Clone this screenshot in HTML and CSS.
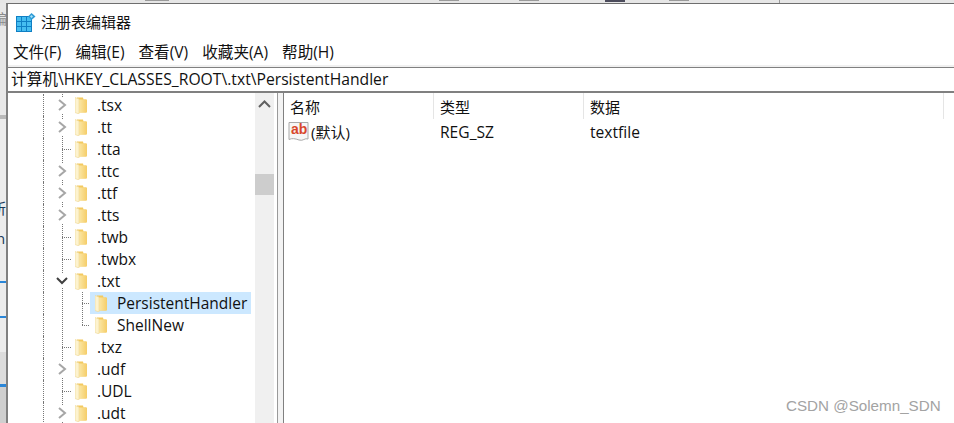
FILE: index.html
```html
<!DOCTYPE html>
<html lang="zh-CN">
<head>
    <meta charset="UTF-8">
    <title>注册表编辑器</title>
    <link rel="stylesheet" href="styles.css">
</head>
<body>
    <svg class="defs" width="0" height="0">
        <defs>
            <linearGradient id="gold" x1="0" y1="0" x2="1" y2="0">
                <stop offset="0" stop-color="#fbe7a6"/>
                <stop offset="1" stop-color="#f5cd68"/>
            </linearGradient>
        </defs>
        <symbol id="folder" viewBox="0 0 12 17">
            <path d="M2 0.5H8L8.5 2.5H11V15.5H2Z" fill="#f3c95f"/>
            <path d="M4 2.5H12V15.5H4Z" fill="url(#gold)"/>
            <path d="M0 0.5L4 2V17L0 15.5Z" fill="#fdf3cf" stroke="#eed695" stroke-width="0.6"/>
        </symbol>
        <symbol id="closed" viewBox="0 0 10 12">
            <path d="M2 1L8 6L2 11" fill="none" stroke="#a6a6a6" stroke-width="2"/>
        </symbol>
        <symbol id="open" viewBox="0 0 12 10">
            <path d="M1 2L6 7L11 2" fill="none" stroke="#404040" stroke-width="2"/>
        </symbol>
    </svg>

    <div class="top-strip">
        <span class="chip chip-a"></span><span class="chip chip-b"></span><span class="chip chip-c"></span><span class="chip chip-d"></span><span class="chip chip-e"></span><span class="chip chip-f"></span>
    </div>

    <div class="page">
        <div class="side-strip">
            <div class="side-a"><span class="side-faint">编</span></div>
            <div class="side-b"></div>
            <div class="side-c"><span class="side-char side-char-1">所</span><span class="side-char side-char-2">n</span></div>
            <div class="side-d"></div>
            <div class="side-e"></div>
            <div class="side-f"></div>
        </div>

        <div class="window">
            <div class="title-bar">
                <svg class="app-icon" width="20" height="20" viewBox="0 0 20 20">
                    <rect x="0" y="3" width="16" height="16" fill="#0f7fc4"/>
                    <g fill="#45bdf0">
                        <rect x="1" y="4" width="4" height="4"/><rect x="6" y="4" width="4" height="4"/><rect x="11" y="4" width="4" height="4"/>
                        <rect x="1" y="9" width="4" height="4"/><rect x="6" y="9" width="4" height="4"/><rect x="11" y="9" width="4" height="4"/>
                        <rect x="1" y="14" width="4" height="4"/><rect x="6" y="14" width="4" height="4"/><rect x="11" y="14" width="4" height="4"/>
                    </g>
                    <path d="M15.5 0L19.5 3.5L15.5 7L12 3.5Z" fill="#2e9bd6"/>
                    <path d="M15.5 2L17 3.5L15.5 5L14 3.5Z" fill="#a8e2f8"/>
                </svg>
                <span class="title-text">注册表编辑器</span>
            </div>

            <div class="menu-bar">
                <span>文件(F)</span>
                <span>编辑(E)</span>
                <span>查看(V)</span>
                <span>收藏夹(A)</span>
                <span>帮助(H)</span>
            </div>

            <div class="address-bar">计算机\HKEY_CLASSES_ROOT\.txt\PersistentHandler</div>

            <div class="main">
                <div class="tree-pane">
                    <div class="tree">
                        <div class="tree-row"><span class="guide"></span><span class="twist"><svg width="10" height="12"><use href="#closed"/></svg></span><svg class="folder"><use href="#folder"/></svg><span class="label">.tsx</span></div>
                        <div class="tree-row"><span class="guide"></span><span class="twist"><svg width="10" height="12"><use href="#closed"/></svg></span><svg class="folder"><use href="#folder"/></svg><span class="label">.tt</span></div>
                        <div class="tree-row"><span class="guide"></span><span class="twist leaf"></span><svg class="folder"><use href="#folder"/></svg><span class="label">.tta</span></div>
                        <div class="tree-row"><span class="guide"></span><span class="twist"><svg width="10" height="12"><use href="#closed"/></svg></span><svg class="folder"><use href="#folder"/></svg><span class="label">.ttc</span></div>
                        <div class="tree-row"><span class="guide"></span><span class="twist"><svg width="10" height="12"><use href="#closed"/></svg></span><svg class="folder"><use href="#folder"/></svg><span class="label">.ttf</span></div>
                        <div class="tree-row"><span class="guide"></span><span class="twist"><svg width="10" height="12"><use href="#closed"/></svg></span><svg class="folder"><use href="#folder"/></svg><span class="label">.tts</span></div>
                        <div class="tree-row"><span class="guide"></span><span class="twist leaf"></span><svg class="folder"><use href="#folder"/></svg><span class="label">.twb</span></div>
                        <div class="tree-row"><span class="guide"></span><span class="twist leaf"></span><svg class="folder"><use href="#folder"/></svg><span class="label">.twbx</span></div>
                        <div class="tree-row"><span class="guide"></span><span class="twist"><svg width="12" height="10"><use href="#open"/></svg></span><svg class="folder"><use href="#folder"/></svg><span class="label">.txt</span></div>
                        <div class="tree-row"><span class="guide"></span><span class="twist plain"></span><span class="elbow"></span><span class="child selected"><svg class="folder"><use href="#folder"/></svg><span class="label">PersistentHandler</span></span></div>
                        <div class="tree-row"><span class="guide"></span><span class="twist plain"></span><span class="elbow last"></span><span class="child"><svg class="folder"><use href="#folder"/></svg><span class="label">ShellNew</span></span></div>
                        <div class="tree-row"><span class="guide"></span><span class="twist leaf"></span><svg class="folder"><use href="#folder"/></svg><span class="label">.txz</span></div>
                        <div class="tree-row"><span class="guide"></span><span class="twist"><svg width="10" height="12"><use href="#closed"/></svg></span><svg class="folder"><use href="#folder"/></svg><span class="label">.udf</span></div>
                        <div class="tree-row"><span class="guide"></span><span class="twist leaf"></span><svg class="folder"><use href="#folder"/></svg><span class="label">.UDL</span></div>
                        <div class="tree-row"><span class="guide"></span><span class="twist"><svg width="10" height="12"><use href="#closed"/></svg></span><svg class="folder"><use href="#folder"/></svg><span class="label">.udt</span></div>
                    </div>
                    <div class="scrollbar">
                        <svg class="scroll-up" width="13" height="8" viewBox="0 0 13 8"><path d="M1 7L6.5 1.5L12 7" fill="none" stroke="#606060" stroke-width="2"/></svg>
                        <div class="scroll-thumb"></div>
                    </div>
                </div>

                <div class="splitter"></div>

                <div class="list-pane">
                    <div class="list-head">
                        <span class="col col-name">名称</span>
                        <span class="col col-type">类型</span>
                        <span class="col col-data">数据</span>
                    </div>
                    <div class="list-row">
                        <span class="col col-name">
                            <svg class="value-icon" width="21" height="21" viewBox="0 0 21 21">
                                <path d="M1 1.5H20V18C17 16.5 15 20.5 11 19C7 17.5 4 17 1 18.5Z" fill="#f6f6f6" stroke="#a9a9a9"/>
                                <text class="ab" x="3" y="13">ab</text>
                            </svg>
                            <span>(默认)</span>
                        </span>
                        <span class="col col-type">REG_SZ</span>
                        <span class="col col-data">textfile</span>
                    </div>
                </div>
            </div>
        </div>
    </div>

    <div class="watermark">CSDN @Solemn_SDN</div>
</body>
</html>
```

FILE: styles.css
```css
html, body {
    margin: 0;
    height: 423px;
    overflow: hidden;
    background-color: #fff;
    font-family: "Open Sans", "Noto Sans CJK SC", sans-serif;
    font-size: 15.5px;
    color: #111;
}
.defs {
    display: block;
    height: 0;
}
.top-strip {
    display: flex;
    height: 3px;
    background-color: #e6e6e6;
    overflow: hidden;
}
.chip {
    display: block;
    height: 1px;
    background-color: #9a9a9a;
}
.chip-a { width: 24px; margin-left: 145px; }
.chip-b { width: 20px; margin-left: 270px; }
.chip-c { width: 20px; margin-left: 60px; }
.chip-d { width: 20px; margin-left: 66px; background-color: #4c4c5c; height: 2px; }
.chip-e { width: 20px; margin-left: 44px; }
.chip-f { width: 1px; margin-left: 90px; height: 3px; }
.page {
    display: flex;
    height: 420px;
}

/* bit of the window behind */
.side-strip {
    width: 6px;
    flex: none;
    display: flex;
    flex-direction: column;
    overflow: hidden;
    background-color: #e8e8e8;
}
.side-a {
    height: 112px;
    flex: none;
}
.side-faint {
    display: block;
    margin: 5px 0 0 -7px;
    font-size: 14px;
    color: #8a8a8a;
}
.side-b {
    height: 4px;
    flex: none;
    background-color: #b9b9b9;
}
.side-c {
    height: 162px;
    flex: none;
    background-color: #ececec;
}
.side-char {
    display: block;
    white-space: nowrap;
    font-size: 15px;
    line-height: 20px;
    color: #1a3a5a;
}
.side-char-1 { margin: 79px 0 0 -9px; }
.side-char-2 { margin: 10px 0 0 -4px; }
.side-d {
    height: 35px;
    flex: none;
    background-color: #ececec;
    border-top: 2px solid #2a86d8;
    box-sizing: border-box;
}
.side-e {
    height: 68px;
    flex: none;
    background: linear-gradient(#ececec 0, #ececec 52%, #dcdcdc 52%);
    border-top: 2px solid #2a86d8;
    box-sizing: border-box;
}
.side-f {
    height: 39px;
    flex: none;
    background-color: #cfcfcf;
    border-top: 3px solid #2a86d8;
    box-sizing: border-box;
}

.window {
    flex: 1;
    min-width: 0;
    display: flex;
    flex-direction: column;
    border-top: 1px solid #6e6e6e;
    border-left: 2px solid #808080;
    background-color: #fff;
}
.title-bar {
    display: flex;
    align-items: center;
    height: 35px;
    flex: none;
    padding-left: 8px;
    font-size: 15px;
}
.app-icon {
    margin-top: 2px;
}
.title-text {
    margin-left: 5px;
}
.menu-bar {
    display: flex;
    align-items: center;
    gap: 14px;
    height: 26px;
    box-sizing: border-box;
    padding: 0 0 1px 5px;
    flex: none;
    font-size: 15.6px;
}
.address-bar {
    flex: none;
    height: 24px;
    line-height: 24px;
    padding-left: 3px;
    border-top: 2px solid #f0f0f0;
    box-shadow: inset 0 1px 0 #808080;
    border-bottom: 2px solid #808080;
    white-space: nowrap;
    font-size: 15.7px;
}

.main {
    flex: 1;
    min-height: 0;
    display: flex;
    overflow: hidden;
}
.tree-pane {
    display: flex;
    width: 268px;
    flex: none;
}
.tree {
    width: 247px;
    flex: none;
    padding-top: 1px;
}
.tree-row {
    display: flex;
    align-items: center;
    height: 22px;
    padding-left: 35px;
    white-space: nowrap;
}
.guide {
    width: 9px;
    height: 22px;
    flex: none;
    box-sizing: border-box;
    border-left: 1px dotted #777;
}
.twist {
    display: flex;
    align-items: center;
    justify-content: center;
    width: 20px;
    height: 22px;
    flex: none;
    background: repeating-linear-gradient(#777 0 1px, transparent 1px 2px) 10px 0 / 1px 100% no-repeat;
}
.twist svg {
    background-color: #fff;
    display: block;
    box-shadow: 0 2px 0 #fff, 0 -2px 0 #fff;
}
.twist.leaf {
    background:
        repeating-linear-gradient(#777 0 1px, transparent 1px 2px) 10px 0 / 1px 100% no-repeat,
        repeating-linear-gradient(90deg, #777 0 1px, transparent 1px 2px) 10px 11px / 10px 1px no-repeat;
}
.folder {
    width: 12px;
    height: 17px;
    flex: none;
    margin-left: 3px;
}
.label {
    margin-left: 10px;
}
.elbow {
    width: 18px;
    height: 22px;
    flex: none;
    background:
        repeating-linear-gradient(#777 0 1px, transparent 1px 2px) 10px 0 / 1px 100% no-repeat,
        repeating-linear-gradient(90deg, #777 0 1px, transparent 1px 2px) 10px 11px / 8px 1px no-repeat;
}
.elbow.last {
    background:
        repeating-linear-gradient(#777 0 1px, transparent 1px 2px) 10px 0 / 1px 12px no-repeat,
        repeating-linear-gradient(90deg, #777 0 1px, transparent 1px 2px) 10px 11px / 8px 1px no-repeat;
}
.child {
    display: flex;
    align-items: center;
    width: 161px;
    height: 22px;
    padding-left: 2px;
    box-sizing: border-box;
}
.child.selected {
    background-color: #cce8ff;
}
.scrollbar {
    width: 19px;
    flex: none;
    background-color: #f0f0f0;
}
.scroll-up {
    display: block;
    margin: 7px 0 0 3px;
}
.scroll-thumb {
    height: 21px;
    margin-top: 66px;
    background-color: #cdcdcd;
}
.splitter {
    width: 7px;
    flex: none;
    background-color: #f3f3f3;
    border-left: 1px solid #9a9a9a;
    border-right: 1px solid #808080;
    margin-left: 1px;
    box-sizing: border-box;
}
.list-pane {
    flex: 1;
    min-width: 0;
    font-size: 15px;
}
.list-head {
    display: flex;
    height: 26px;
    align-items: center;
}
.list-row {
    display: flex;
    height: 24px;
    align-items: center;
}
.list-row .col-type, .list-row .col-data {
    font-size: 15.6px;
    padding-top: 1px;
}
.col {
    display: flex;
    align-items: center;
    height: 100%;
    box-sizing: border-box;
    flex: none;
    white-space: nowrap;
}
.col-name {
    width: 150px;
    padding-left: 6px;
}
.col-type {
    width: 150px;
    padding-left: 6px;
}
.col-data {
    width: 360px;
    padding-left: 6px;
}
.list-head .col {
    border-right: 1px solid #e5e5e5;
}
.list-row .col-name {
    padding-left: 4px;
}
.value-icon {
    flex: none;
    margin-right: 2px;
}
.ab {
    font-family: "Liberation Sans", sans-serif;
    font-size: 14px;
    font-weight: bold;
    fill: #d9472b;
}
.watermark {
    position: absolute;
    left: 786px;
    top: 397px;
    font-family: "Liberation Sans", sans-serif;
    font-size: 15.2px;
    line-height: 18px;
    color: #a3a3a3;
}
```
